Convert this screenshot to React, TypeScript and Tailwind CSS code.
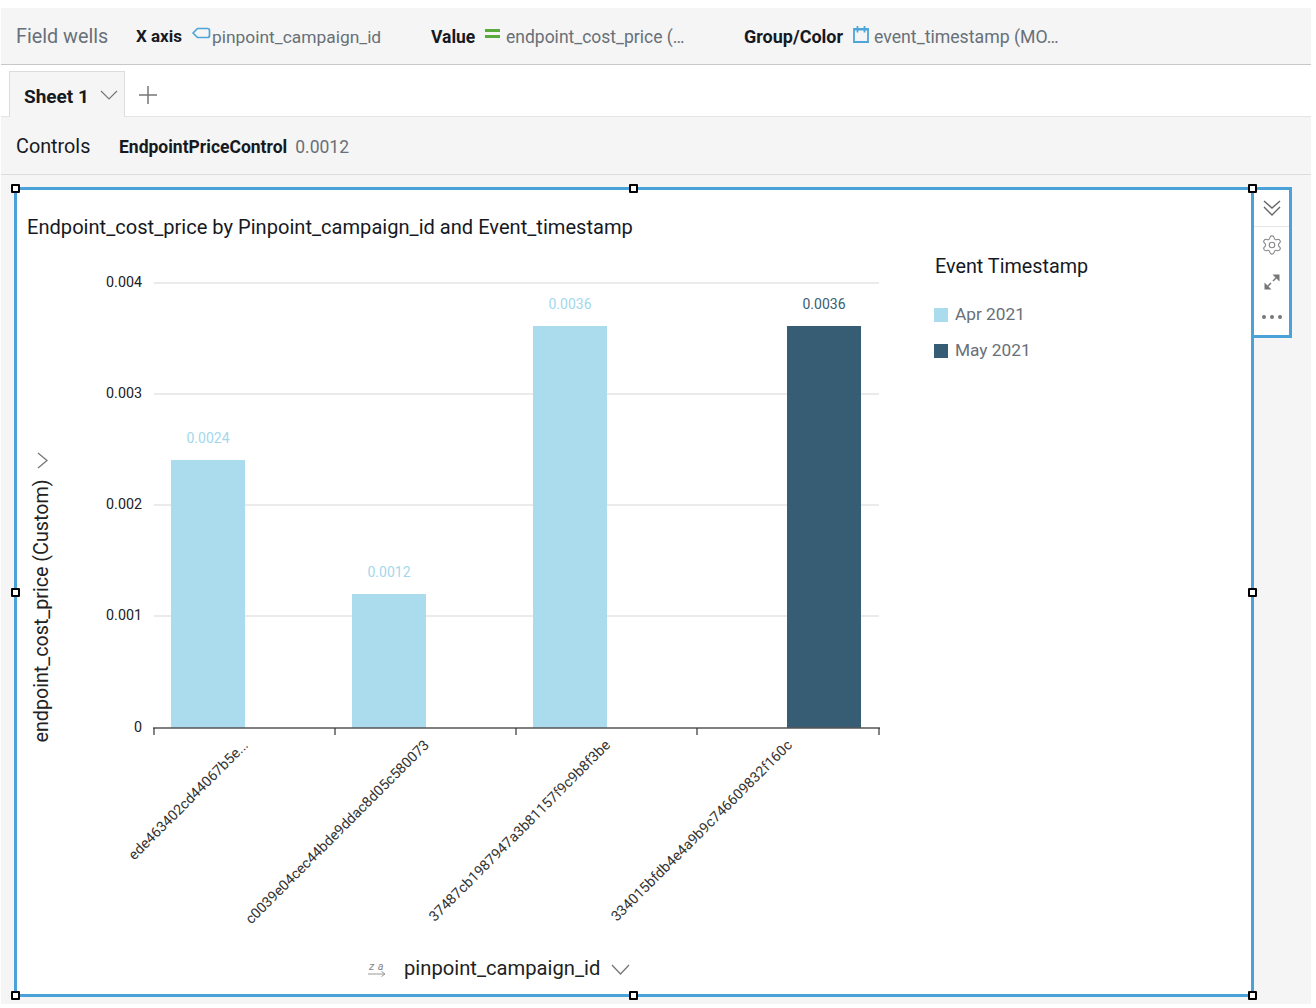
import React from "react";
import { Settings } from "lucide-react";

const font = "[font-family:Roboto,'Noto_Sans',sans-serif]";

const bars = [
    { x: 171, top: 460, label: "0.0024", color: "#aadcee" },
    { x: 352, top: 594, label: "0.0012", color: "#aadcee" },
    { x: 533, top: 326, label: "0.0036", color: "#aadcee" },
    { x: 787, top: 326, label: "0.0036", color: "#375d75" },
];

const gridLines = [
    { y: 283, label: "0.004" },
    { y: 394, label: "0.003" },
    { y: 505, label: "0.002" },
    { y: 616, label: "0.001" },
];

const ticks = [
    { x: 249, y: 746, text: "ede463402cd44067b5e..." },
    { x: 430, y: 746, text: "c0039e04cec44bde9ddac8d05c580073" },
    { x: 611, y: 746, text: "37487cb1987947a3b81157f9c9b8f3be" },
    { x: 793, y: 746, text: "334015bfdb4e4a9b9c746609832f160c" },
];

// chart is drawn in page coordinates, shifted by the frame origin
const Chart = () => (
    <svg width="1238" height="808" viewBox="14 187 1238 808" className="block" style={{ fontFamily: "Roboto, sans-serif" }}>
        {gridLines.map((g) => (
            <g key={g.y}>
                <line x1="154" x2="879" y1={g.y} y2={g.y} stroke="#e4e4e4" strokeWidth="1.5" />
                <text x="142" y={g.y + 4} textAnchor="end" fontSize="14.3" fill="#222">{g.label}</text>
            </g>
        ))}
        <text x="142" y="732" textAnchor="end" fontSize="14.3" fill="#222">0</text>
        {bars.map((b) => (
            <g key={b.x}>
                <rect x={b.x} y={b.top} width="74" height={728 - b.top} fill={b.color} />
                <text x={b.x + 37} y={b.top - 17} textAnchor="middle" fontSize="14" fill={b.color === "#375d75" ? "#375d75" : "#a3d8eb"}>{b.label}</text>
            </g>
        ))}
        <line x1="153" x2="880" y1="728" y2="728" stroke="#555" strokeWidth="1.5" />
        {[154, 335, 516, 697, 879].map((x) => (
            <line key={x} x1={x} x2={x} y1="728" y2="735" stroke="#333" strokeWidth="1.2" />
        ))}
        {ticks.map((t) => (
            <text key={t.x} x={t.x} y={t.y} textAnchor="end" fontSize="14.3" fill="#333" transform={`rotate(-45 ${t.x} ${t.y})`}>{t.text}</text>
        ))}
        <text x="48" y="611" textAnchor="middle" fontSize="19.7" fill="#222" transform="rotate(-90 48 611)">endpoint_cost_price (Custom)</text>
        <path d="M38 453l9 7.500-9 7.500" fill="none" stroke="#777" strokeWidth="1.300" />
        {/* sort glyph */}
        <text x="369" y="970" fontSize="11" fontStyle="italic" fill="#888" letterSpacing="3.500">za</text>
        <path d="M368 974h17m-3.500-2.500l3.500 2.500-3.500 2.500" fill="none" stroke="#999" strokeWidth="1" />
        <text x="404" y="975" fontSize="20.200" fill="#222">pinpoint_campaign_id</text>
        <path d="M612 965l8.500 9 8.500-9" fill="none" stroke="#777" strokeWidth="1.300" />
    </svg>
);

const Handle = ({ className }: { className: string }) => (
    <div className={`absolute w-[9px] h-[9px] bg-white border-2 border-black rounded-[1px] ${className}`} />
);

export default function App() {
    return (
        <div className={`w-[1316px] h-[1008px] overflow-hidden bg-white pt-2 pl-px ${font}`}>
            <div className="w-[1310px] h-[996px] flex flex-col">
                <div className="h-[57px] shrink-0 bg-[#f5f5f5] border-b border-[#c8c8c8] flex items-center pl-[15px] pt-[2px] text-[17.400px] whitespace-nowrap">
                    <span className="text-[19.800px] text-[#687078] w-[120px]">Field wells</span>
                    <span className="font-bold text-[#16191f] text-[17px] w-[56px]">X axis</span>
                    <svg width="20" height="14" viewBox="0 0 20 14" className="-mt-1.5 shrink-0">
                        <path d="M5.500 1.500h10a2 2 0 0 1 2 2v5a2 2 0 0 1-2 2h-10l-4.500-4.500z" fill="none" stroke="#4ea5d9" strokeWidth="1.700" strokeLinejoin="round" />
                    </svg>
                    <span className="text-[#687078] w-[219px]">pinpoint_campaign_id</span>
                    <span className="font-bold text-[#16191f] text-[17.500px] w-[54px]">Value</span>
                    <svg width="16" height="12" viewBox="0 0 16 12" className="-mt-1.5 mr-[5px] shrink-0">
                        <rect x="0" y="1" width="15" height="3" fill="#5aab3c" />
                        <rect x="0" y="7" width="15" height="3" fill="#5aab3c" />
                    </svg>
                    <span className="text-[#687078] text-[17.500px] w-[238px]">endpoint_cost_price (…</span>
                    <span className="font-bold text-[#16191f] text-[18px] w-[109px] -mt-px">Group/Color</span>
                    <svg width="16" height="17" viewBox="0 0 16 17" className="-mt-1.5 mr-[5px] shrink-0">
                        <path d="M1 3h14v13h-14z" fill="none" stroke="#4ea5d9" strokeWidth="1.800" />
                        <path d="M1 3.500h14" fill="none" stroke="#4ea5d9" strokeWidth="2" />
                        <path d="M4.500 0v6.500M11.500 0v6.500" fill="none" stroke="#4ea5d9" strokeWidth="1.800" />
                    </svg>
                    <span className="text-[#687078] text-[17.700px]">event_timestamp (MO…</span>
                </div>

                <div className="h-[52px] shrink-0 bg-white border-b border-[#e4e4e4] flex items-end pl-2">
                    <div className="h-[46px] -mb-px w-[116px] bg-[#f5f5f5] border-t border-l border-r border-[#dcdcdc] flex items-center justify-between pl-[14px] pr-[6px] text-[19px] font-bold text-[#16191f] whitespace-nowrap">
                        <span className="mt-[5px]">Sheet 1</span>
                        <svg width="18" height="10" viewBox="0 0 18 10" className="shrink-0">
                            <path d="M1 1l8 8 8-8" fill="none" stroke="#777" strokeWidth="1.200" />
                        </svg>
                    </div>
                    <svg width="20" height="20" viewBox="0 0 20 20" className="ml-[13px] mb-[11px] shrink-0">
                        <path d="M10 1v18M1 10h18" fill="none" stroke="#777" strokeWidth="1.500" />
                    </svg>
                </div>

                <div className="h-[58px] shrink-0 bg-[#f5f5f5] border-b border-[#dcdcdc] flex items-center pl-[15px] pt-[3px] whitespace-nowrap">
                    <span className="text-[19.800px] text-[#16191f] w-[103px]">Controls</span>
                    <span className="font-bold text-[17.500px] text-[#16191f] mr-2">EndpointPriceControl</span>
                    <span className="text-[17.500px] text-[#687078]">0.0012</span>
                </div>

                <div className="flex-1 bg-[#f5f5f5] pt-[12px] pl-[13px]">
                    <div className="relative w-[1240px] h-[810px] bg-white border-[3px] border-[#4aa3d8]">
                        <div className="-m-[3px]"><Chart /></div>
                        <div className="absolute left-[10px] top-[22px] text-[20.100px] text-[#16191f] whitespace-nowrap">
                            Endpoint_cost_price by Pinpoint_campaign_id and Event_timestamp
                        </div>

                        <div className="absolute left-[917px] top-[62px] w-[200px]">
                            <div className="text-[19.800px] text-[#16191f] pl-px">Event Timestamp</div>
                            <div className="flex flex-col gap-[14px] mt-[22px] text-[17.300px] text-[#687078]">
                                <div className="flex items-center gap-[7px] h-[22px]"><span className="w-[14px] h-[14px] bg-[#aadcee]" />Apr 2021</div>
                                <div className="flex items-center gap-[7px] h-[22px]"><span className="w-[14px] h-[14px] bg-[#375d75]" />May 2021</div>
                            </div>
                        </div>

                        <div className="absolute left-[1234px] -top-[3px] w-[41px] h-[151px] bg-white border-[3px] border-[#4aa3d8] flex flex-col items-center">
                            <div className="h-[37px] w-full shrink-0 border-b border-[#e6e6e6] flex items-center justify-center">
                                <svg width="20" height="18" viewBox="0 0 20 18">
                                    <path d="M2 2l8 7 8-7M2 8l8 8 8-8" fill="none" stroke="#666" strokeWidth="1.400" />
                                </svg>
                            </div>
                            <Settings size={22} strokeWidth={1.200} color="#888" className="mt-[7px] shrink-0" />
                            <svg width="16" height="16" viewBox="0 0 16 16" className="mt-[18px] shrink-0">
                                <path d="M9 7l4-4M7 9l-4 4" fill="none" stroke="#777" strokeWidth="1.500" />
                                <path d="M15.500 0.500v7l-7-7zM0.500 15.500v-7l7 7z" fill="#777" />
                            </svg>
                            <div className="flex gap-[4px] mt-[25px] ml-[1px] shrink-0">
                                <span className="w-[4px] h-[4px] rounded-full bg-[#777]" />
                                <span className="w-[4px] h-[4px] rounded-full bg-[#777]" />
                                <span className="w-[4px] h-[4px] rounded-full bg-[#777]" />
                            </div>
                        </div>

                        <Handle className="-left-[6px] -top-[6px]" />
                        <Handle className="left-[612px] -top-[6px]" />
                        <Handle className="left-[1231px] -top-[6px]" />
                        <Handle className="-left-[6px] top-[398px]" />
                        <Handle className="left-[1231px] top-[398px]" />
                        <Handle className="-left-[6px] top-[801px]" />
                        <Handle className="left-[612px] top-[801px]" />
                        <Handle className="left-[1231px] top-[801px]" />
                    </div>
                </div>
            </div>
        </div>
    );
}
